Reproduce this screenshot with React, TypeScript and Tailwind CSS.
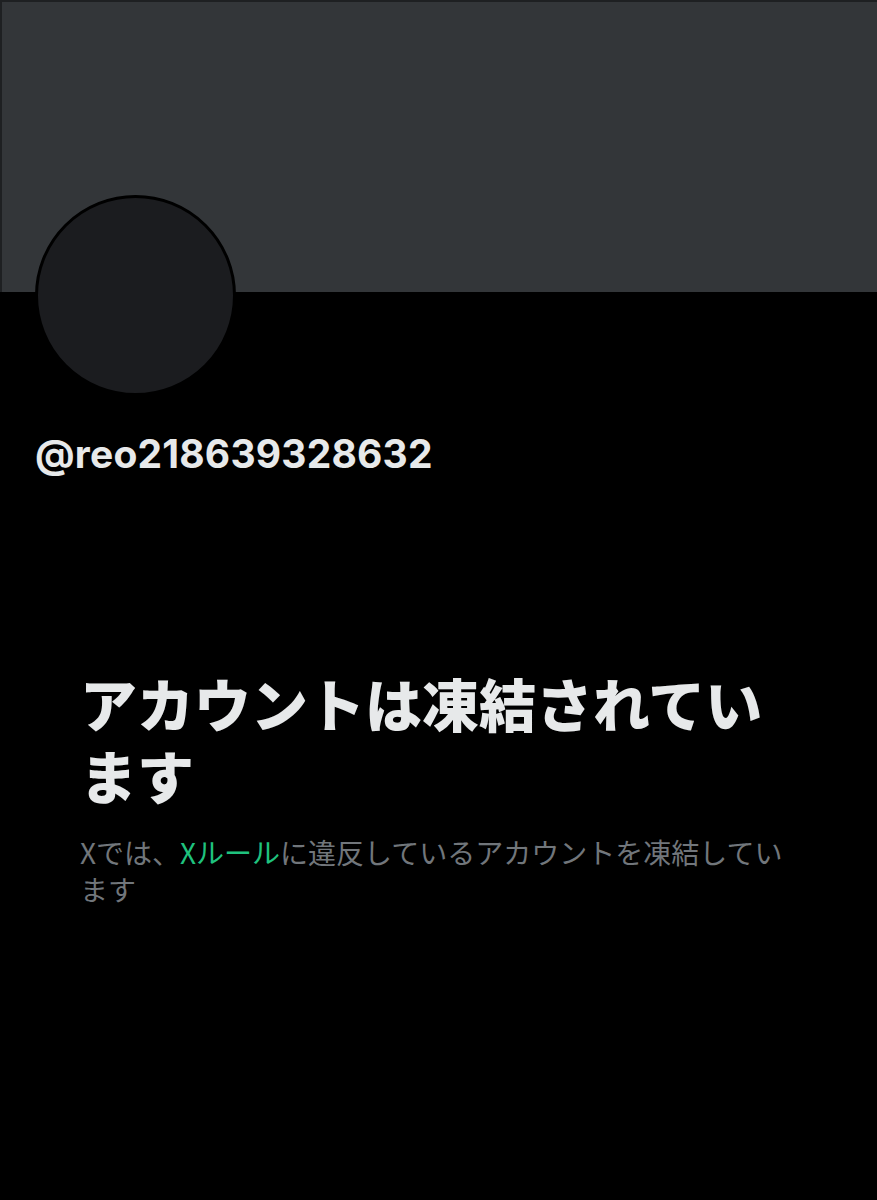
export default function App() {
  return (
    <div className="min-h-[1200px] w-full bg-black" style={{ fontFamily: '"Noto Sans CJK JP", "Noto Sans", sans-serif' }}>
      <div className="h-[292px] w-full border-l-2 border-t-2 border-[#1e2022] bg-[#333639]" />
      <div className="px-[35px]">
        <div className="-mt-[97px] size-[201px] rounded-full border-[3px] border-black bg-[#1b1c1f]" />
        <p className="mt-[35px] text-[39px] font-bold leading-[46px] tracking-[0.2px] text-[#e7e9ea]" style={{ fontFamily: "Inter, sans-serif" }}>
          @reo218639328632
        </p>
      </div>
      <div className="px-[80px] pt-[189px]">
        <h1 className="text-[57px] font-black leading-[72px] text-[#e7e9ea]">アカウントは凍結されています</h1>
        <p className="mt-[24px] text-[28px] leading-[37px] text-[#71767b]">
          Xでは、<span className="text-[#1fc27e]">Xルール</span>に違反しているアカウントを凍結しています
        </p>
      </div>
    </div>
  );
}
